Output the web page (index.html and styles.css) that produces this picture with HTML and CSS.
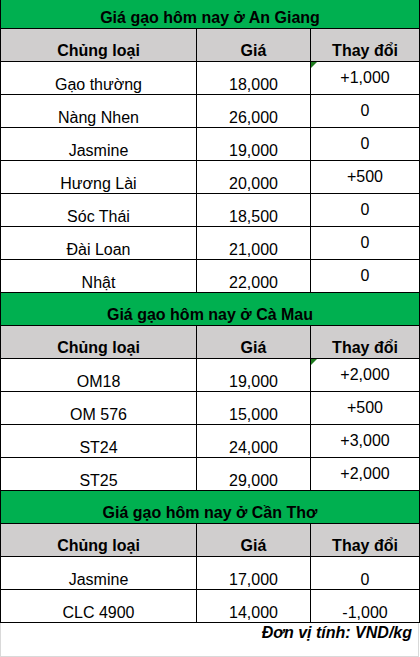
FILE: index.html
```html
<!DOCTYPE html>
<html lang="vi">
<head>
<meta charset="utf-8">
<title>Giá gạo hôm nay</title>
<link rel="stylesheet" href="styles.css">
</head>
<body>
<div class="sheet">
  <div class="section first">
    <div class="title">Giá gạo hôm nay ở An Giang</div>
    <div class="cell head">Chủng loại</div>
    <div class="cell head">Giá</div>
    <div class="cell head">Thay đổi</div>

    <div class="cell">Gạo thường</div>
    <div class="cell">18,000</div>
    <div class="cell mid flag">+1,000</div>

    <div class="cell">Nàng Nhen</div>
    <div class="cell">26,000</div>
    <div class="cell mid">0</div>

    <div class="cell">Jasmine</div>
    <div class="cell">19,000</div>
    <div class="cell mid">0</div>

    <div class="cell">Hương Lài</div>
    <div class="cell">20,000</div>
    <div class="cell mid">+500</div>

    <div class="cell">Sóc Thái</div>
    <div class="cell">18,500</div>
    <div class="cell mid">0</div>

    <div class="cell">Đài Loan</div>
    <div class="cell">21,000</div>
    <div class="cell mid">0</div>

    <div class="cell">Nhật</div>
    <div class="cell">22,000</div>
    <div class="cell mid">0</div>
  </div>

  <div class="section">
    <div class="title">Giá gạo hôm nay ở Cà Mau</div>
    <div class="cell head">Chủng loại</div>
    <div class="cell head">Giá</div>
    <div class="cell head">Thay đổi</div>

    <div class="cell">OM18</div>
    <div class="cell">19,000</div>
    <div class="cell mid flag">+2,000</div>

    <div class="cell">OM 576</div>
    <div class="cell">15,000</div>
    <div class="cell mid">+500</div>

    <div class="cell">ST24</div>
    <div class="cell">24,000</div>
    <div class="cell mid">+3,000</div>

    <div class="cell">ST25</div>
    <div class="cell">29,000</div>
    <div class="cell mid">+2,000</div>
  </div>

  <div class="section">
    <div class="title">Giá gạo hôm nay ở Cần Thơ</div>
    <div class="cell head">Chủng loại</div>
    <div class="cell head">Giá</div>
    <div class="cell head">Thay đổi</div>

    <div class="cell">Jasmine</div>
    <div class="cell">17,000</div>
    <div class="cell">0</div>

    <div class="cell">CLC 4900</div>
    <div class="cell">14,000</div>
    <div class="cell">-1,000</div>
  </div>

  <div class="footer">Đơn vị tính: VND/kg</div>
</div>
</body>
</html>
```

FILE: styles.css
```css
* {
  box-sizing: border-box;
}

html, body {
  margin: 0;
  padding: 0;
  background: #ffffff;
}

body {
  font-family: "Liberation Sans", Arial, sans-serif;
  font-size: 16px;
  color: #000000;
}

.sheet {
  width: 420px;
}

.section {
  display: grid;
  grid-template-columns: 196px 114px 109px;
  grid-auto-rows: 33px;
  border-left: 1px solid #000000;
}

.section.first {
  grid-template-rows: 29px;
}

.title {
  grid-column: 1 / -1;
  background: #00b050;
  font-weight: bold;
  display: flex;
  justify-content: center;
  align-items: flex-end;
  border-right: 1px solid #000000;
  border-bottom: 1px solid #000000;
  line-height: 18px;
  padding-bottom: 1px;
}

.cell {
  display: flex;
  justify-content: center;
  align-items: flex-end;
  border-right: 1px solid #000000;
  border-bottom: 1px solid #000000;
  line-height: 18px;
  white-space: nowrap;
  position: relative;
}

.cell.head {
  background: #d0cece;
  font-weight: bold;
  padding-bottom: 1px;
}

.cell.mid {
  align-items: center;
}

.flag::before {
  content: "";
  position: absolute;
  top: 0;
  left: 0;
  width: 0;
  height: 0;
  border-top: 6px solid #1e7b1e;
  border-right: 6px solid transparent;
}

.footer {
  height: 34px;
  border-left: 1px solid #d9d9d9;
  border-right: 1px solid #d9d9d9;
  border-bottom: 1px solid #d9d9d9;
  margin-right: 1px;
  text-align: right;
  font-weight: bold;
  font-style: italic;
  line-height: 18px;
  padding: 1px 6px 0 0;
}
```
